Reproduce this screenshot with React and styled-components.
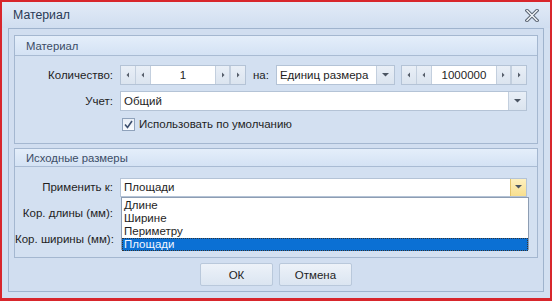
import React from "react";
import styled, { createGlobalStyle } from "styled-components";

const Global = createGlobalStyle`
  html, body { margin: 0; padding: 0; background: #ffffff; }
  body { font-family: "Liberation Sans", Arial, sans-serif; }
  * { box-sizing: border-box; }
`;

const Window = styled.div`
  width: 552px;
  height: 301px;
  border: 2px solid #d8262c;
  border-bottom-width: 3px;
  background: #d3e0f1;
  display: flex;
  flex-direction: column;
  font-family: "Liberation Sans", Arial, sans-serif;
  font-size: 11.5px;
  color: #1e1e1e;
  overflow: hidden;
  white-space: nowrap;
`;

const TitleBar = styled.div`
  height: 26px;
  flex: none;
  display: flex;
  align-items: center;
  justify-content: space-between;
  padding: 0 8px 0 11px;
  background: linear-gradient(#e2ebf7, #d0def0);
`;

const Title = styled.span`
  font-size: 12.3px;
  color: #2a3a55;
`;

const CloseBtn = styled.div`
  width: 16px;
  height: 16px;
  display: flex;
  align-items: center;
  justify-content: center;
  margin-right: 2px;
`;

const Client = styled.div`
  flex: 1;
  margin: 0 6px 6px;
  border: 1px solid #9fb3cd;
  background: #d1def0;
  padding: 6px 5px 0;
  display: flex;
  flex-direction: column;
  gap: 4px;
`;

const Group = styled.div`
  border: 1px solid #a4b7d0;
  background: #d3e0f1;
  display: flex;
  flex-direction: column;
  position: relative;
`;

const GroupHeader = styled.div`
  height: ${(p) => p.$h}px;
  display: flex;
  align-items: center;
  padding-left: 11px;
  font-size: 11.3px;
  color: #3b4c66;
  background: linear-gradient(#e4eefa, #d4e2f4);
  border-bottom: 1px solid #a9bbd3;
`;

const Form = styled.div`
  display: grid;
  grid-template-columns: 98px 1fr;
  column-gap: 7px;
  row-gap: ${(p) => p.$gap}px;
  padding: ${(p) => p.$pt}px 10px ${(p) => p.$pb}px 0;
  align-items: center;
`;

const Label = styled.div`
  text-align: right;
  height: 20px;
  line-height: 20px;
`;

const Controls = styled.div`
  display: flex;
  align-items: center;
  gap: ${(p) => p.$gap || 0}px;
  height: ${(p) => p.$h || 20}px;
`;

const Spin = styled.div`
  display: flex;
  width: ${(p) => p.$w}px;
  height: 20px;
  border: 1px solid #b4c3d6;
  background: #ffffff;
`;

const SpinBtn = styled.div`
  width: 15px;
  flex: none;
  display: flex;
  align-items: center;
  justify-content: center;
  background: linear-gradient(#e9eff7, #dbe4ef);
  border-right: ${(p) => (p.$last ? "none" : "1px solid #c3cfde")};
  border-left: ${(p) => (p.$right ? "1px solid #c3cfde" : "none")};
`;

const SpinInput = styled.div`
  flex: 1;
  text-align: center;
  line-height: 18px;
  background: #ffffff;
`;

const Combo = styled.div`
  display: flex;
  width: ${(p) => (p.$w ? p.$w + "px" : "auto")};
  flex: ${(p) => (p.$w ? "none" : "1")};
  height: ${(p) => p.$h || 20}px;
  border: 1px solid #b4c3d6;
  background: #ffffff;
`;

const ComboText = styled.div`
  flex: 1;
  overflow: hidden;
  padding-left: 3px;
  line-height: ${(p) => (p.$h || 20) - 2}px;
`;

const ComboBtn = styled.div`
  width: ${(p) => (p.$hot ? 16 : 18)}px;
  flex: none;
  display: flex;
  align-items: center;
  justify-content: center;
  border-left: 1px solid ${(p) => (p.$hot ? "#e3c36a" : "#c3cfde")};
  background: ${(p) =>
    p.$hot
      ? "linear-gradient(#fdf0c0, #f8df8e)"
      : "linear-gradient(#e9eff7, #dbe4ef)"};
`;

const Na = styled.span`
  padding: 0 1px;
`;

const CheckRow = styled.label`
  display: flex;
  align-items: center;
  gap: 4px;
  height: 14px;
  padding-left: 2px;
`;

const Box = styled.span`
  width: 13px;
  height: 13px;
  border: 1px solid #8fa2bb;
  background: linear-gradient(#e8eef6, #f8fafd);
  display: flex;
  align-items: center;
  justify-content: center;
`;

const Dropdown = styled.div`
  position: absolute;
  left: 106px;
  top: 48px;
  width: 408px;
  height: 53px;
  border: 1px solid #8d9db3;
  background: #ffffff;
  padding-top: 1px;
  display: flex;
  flex-direction: column;
`;

const Item = styled.div`
  height: 13px;
  line-height: 13px;
  padding-left: 2px;
  color: ${(p) => (p.$sel ? "#f2f6ff" : "#1e1e1e")};
  background: ${(p) => (p.$sel ? "#0b70d4" : "transparent")};
  outline: ${(p) => (p.$sel ? "1px dotted #333" : "none")};
  outline-offset: -1px;
`;

const Buttons = styled.div`
  display: flex;
  justify-content: center;
  gap: 6px;
  padding-top: 1px;
`;

const Button = styled.button`
  width: 73px;
  height: 23px;
  border: 1px solid #b9c8db;
  border-radius: 2px;
  background: linear-gradient(#edf2f9, #dbe5f1);
  font-family: "Liberation Sans", Arial, sans-serif;
  font-size: 11.5px;
  color: #1e1e1e;
  padding: 0;
`;

const ArrowL = () => (
  <svg width="4" height="6" viewBox="0 0 4 6">
    <path d="M3 0.5 L0.5 3 L3 5.5 Z" fill="#555d69" />
  </svg>
);
const ArrowR = () => (
  <svg width="4" height="6" viewBox="0 0 4 6">
    <path d="M1 0.5 L3.5 3 L1 5.5 Z" fill="#555d69" />
  </svg>
);
const ArrowD = () => (
  <svg width="7" height="4" viewBox="0 0 7 4">
    <path d="M0 0 H7 L3.5 3.5 Z" fill="#4b5562" />
  </svg>
);

const SpinBox = ({ w, value }) => (
  <Spin $w={w}>
    <SpinBtn><ArrowL /></SpinBtn>
    <SpinBtn><ArrowL /></SpinBtn>
    <SpinInput>{value}</SpinInput>
    <SpinBtn $right><ArrowR /></SpinBtn>
    <SpinBtn $right $last><ArrowR /></SpinBtn>
  </Spin>
);

export default function App() {
  return (
    <>
      <Global />
      <Window>
        <TitleBar>
          <Title>Материал</Title>
          <CloseBtn>
            <svg width="14" height="13" viewBox="0 0 14 13">
              <path d="M2 1.5 L12 11.5 M12 1.5 L2 11.5" stroke="#5b6573" strokeWidth="3.4" strokeLinecap="square" />
              <path d="M2 1.5 L12 11.5 M12 1.5 L2 11.5" stroke="#f4f7fb" strokeWidth="1.4" strokeLinecap="square" />
            </svg>
          </CloseBtn>
        </TitleBar>
        <Client>
          <Group>
            <GroupHeader $h={20}>Материал</GroupHeader>
            <Form $gap={6} $pt={9} $pb={12}>
              <Label>Количество:</Label>
              <Controls $gap={6}>
                <SpinBox w={126} value="1" />
                <Na>на:</Na>
                <Combo $w={119}>
                  <ComboText>Единиц размера</ComboText>
                  <ComboBtn><ArrowD /></ComboBtn>
                </Combo>
                <SpinBox w={126} value="1000000" />
              </Controls>
              <Label>Учет:</Label>
              <Controls>
                <Combo>
                  <ComboText>Общий</ComboText>
                  <ComboBtn><ArrowD /></ComboBtn>
                </Combo>
              </Controls>
              <div />
              <Controls $h={14}>
                <CheckRow>
                  <Box>
                    <svg width="9" height="9" viewBox="0 0 9 9">
                      <path d="M1 4.5 L3.5 7.5 L8 1" stroke="#3c4f6e" strokeWidth="1.6" fill="none" />
                    </svg>
                  </Box>
                  Использовать по умолчанию
                </CheckRow>
              </Controls>
            </Form>
          </Group>
          <Group>
            <GroupHeader $h={18}>Исходные размеры</GroupHeader>
            <Form $gap={6} $pt={10} $pb={8}>
              <Label>Применить к:</Label>
              <Controls>
                <Combo $h={19}>
                  <ComboText $h={19}>Площади</ComboText>
                  <ComboBtn $hot><ArrowD /></ComboBtn>
                </Combo>
              </Controls>
              <Label>Кор. длины (мм):</Label>
              <Controls />
              <Label>Кор. ширины (мм):</Label>
              <Controls />
            </Form>
            <Dropdown>
              <Item>Длине</Item>
              <Item>Ширине</Item>
              <Item>Периметру</Item>
              <Item $sel>Площади</Item>
            </Dropdown>
          </Group>
          <Buttons>
            <Button>ОК</Button>
            <Button>Отмена</Button>
          </Buttons>
        </Client>
      </Window>
    </>
  );
}
